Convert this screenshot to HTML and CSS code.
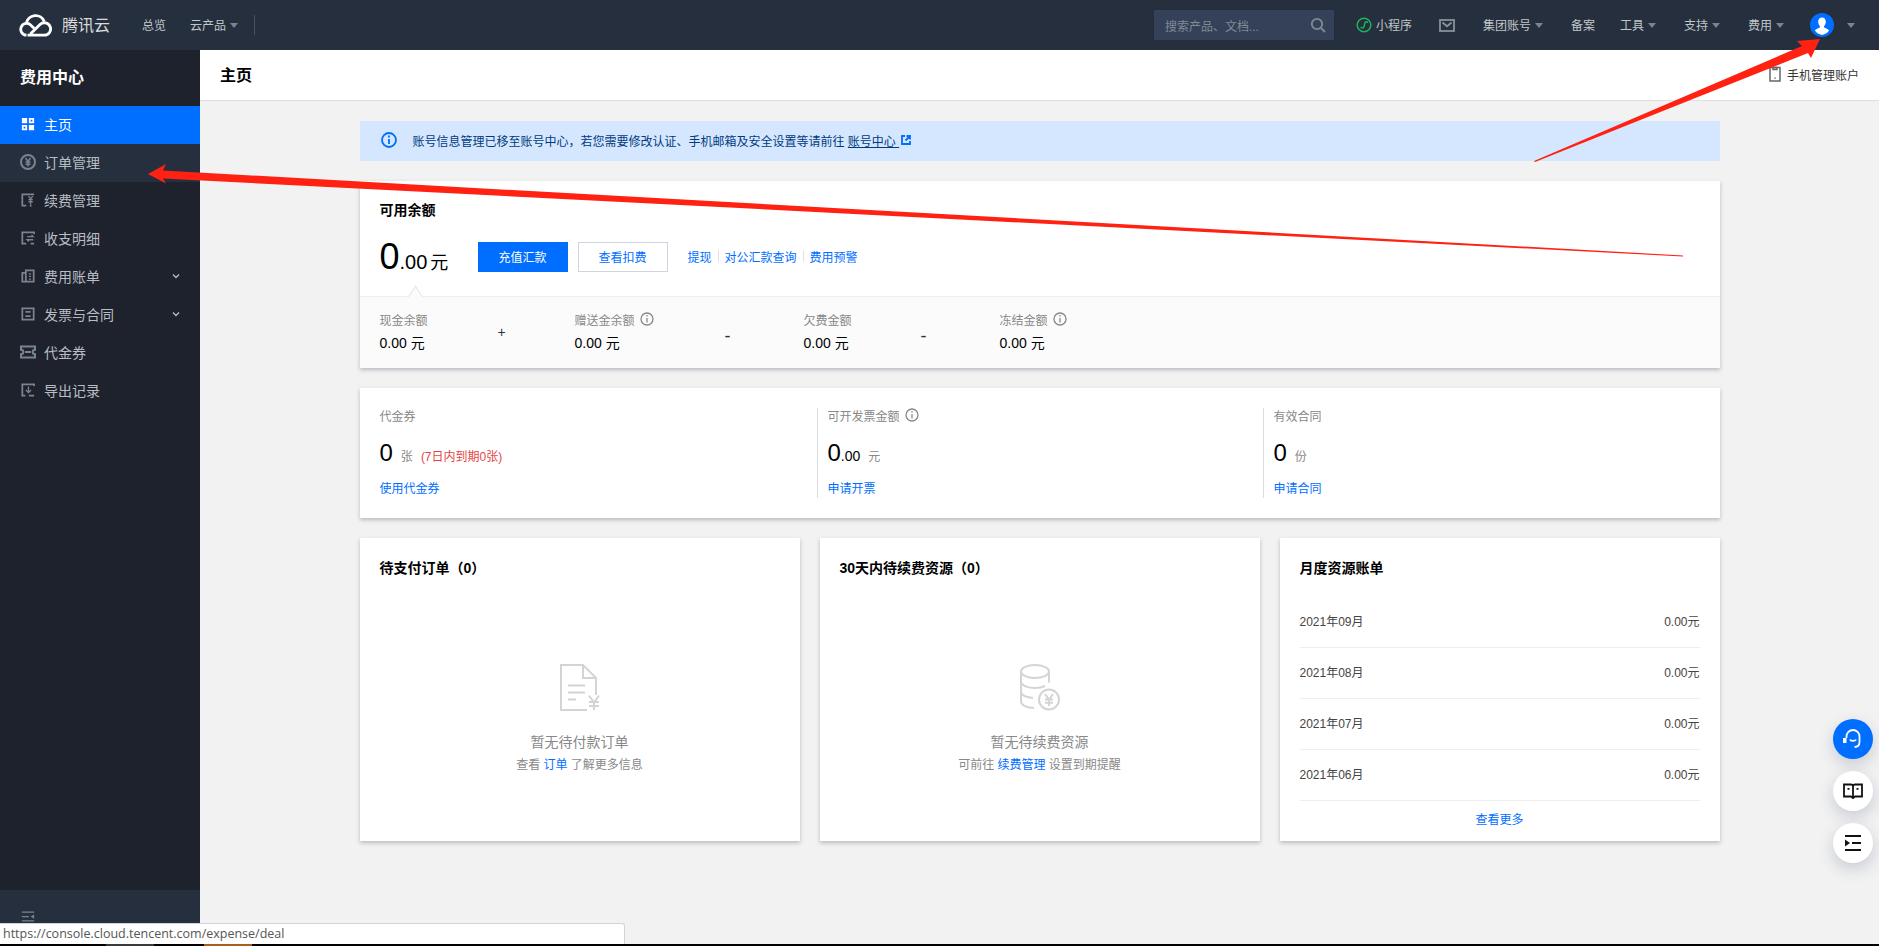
FILE: index.html
```html
<!DOCTYPE html>
<html lang="zh-CN">
<head>
  <meta charset="UTF-8">
  <title>费用中心</title>
  <link rel="stylesheet" href="styles.css">
</head>
<body>
  <header class="topbar">
    <svg class="logo" viewBox="0 0 33 24"><path d="M7.4 10.4A9.3 9.3 0 0 1 25.3 8.6"/><path d="M8.5 22.2H25.4a6.2 6.2 0 1 0-4.4-10.6L11.4 21"/><path d="M7.5 22.2a5.9 5.9 0 1 1 4.6-9.8l3.2 3"/></svg>
    <span class="brand">腾讯云</span>
    <a class="nav-link nav-home">总览</a>
    <a class="nav-link nav-products">云产品<i class="caret"></i></a>
    <span class="nav-divider"></span>
    <div class="top-right">
      <div class="search">
        <span>搜索产品、文档...</span>
        <svg class="search-icon" viewBox="0 0 16 16"><circle cx="7" cy="7" r="5.2"/><path d="M11 11l4 4"/></svg>
      </div>
      <a class="nav-link mini"><svg class="mini-icon" viewBox="0 0 16 16"><circle cx="8" cy="8" r="6.8"/><path d="M5 9.8c0 1.6 2.6 1.8 3-.2l.9-3.6c.4-1.8 2.6-1.6 2.6.1"/></svg>小程序</a>
      <svg class="mail-icon" viewBox="0 0 16 13"><rect x="1" y="1" width="14" height="11"/><path d="M3.5 3.500L8 7.300 12.500 3.500"/></svg>
      <a class="nav-link">集团账号<i class="caret"></i></a>
      <a class="nav-link nav-beian">备案</a>
      <a class="nav-link">工具<i class="caret"></i></a>
      <a class="nav-link">支持<i class="caret"></i></a>
      <a class="nav-link">费用<i class="caret"></i></a>
      <span class="avatar-wrap">
        <svg class="avatar" viewBox="0 0 24 24"><circle class="avatar-bg" cx="12" cy="12" r="12"/><path class="avatar-fg" d="M12 4.500c-2.500 0-3.800 2-3.800 4.300 0 1.800.8 3.300 1.700 4.200v1.400c-1.500.8-4 1.400-5 3.200A11 11 0 0 0 12 22a11 11 0 0 0 7.100-4.400c-1-1.800-3.500-2.400-5-3.200V13c.9-.9 1.700-2.400 1.700-4.200 0-2.300-1.300-4.300-3.800-4.300z"/></svg>
        <i class="caret"></i>
      </span>
    </div>
  </header>

  <div class="main">
    <aside class="sidebar">
      <div class="side-title">费用中心</div>
      <nav class="side-nav">
        <a class="side-item active"><svg class="ico" viewBox="0 0 16 16"><path class="solid" d="M1 1h6v6H1zM9 9h6v6H9zM1 9h6v6H1zM3 11v2h2v-2zM9 1h6v6H9zM11 3v2h2V3z" fill-rule="evenodd"/></svg>主页</a>
        <a class="side-item hover"><svg class="ico big" viewBox="0 0 16 16"><circle cx="8" cy="8" r="7"/><path class="thin" d="M5.500 4L8 7.500 10.500 4M8 7.500V12.500M5.500 8h5M5.500 10.300h5"/></svg>订单管理</a>
        <a class="side-item"><svg class="ico" viewBox="0 0 16 16"><path d="M15 1.500H1.500v13H6"/><path class="thin" d="M8.500 3.500L11 6.500 13.500 3.500M11 6.500V13M8.500 7.500h5M8.500 10h5"/><path d="M10 14.500h2"/></svg>续费管理</a>
        <a class="side-item"><svg class="ico" viewBox="0 0 16 16"><path d="M15 3.500V1.500H1.500v13H6M15 14.500H11"/><path class="thin" d="M7 6.500h7l-2-2M14 10H7l2 2"/></svg>收支明细</a>
        <a class="side-item has-sub"><svg class="ico" viewBox="0 0 16 16"><path d="M1.500 4.500h4v10h-4zM5.500 1.500h9v13h-9z"/><path class="thin" d="M9 5.500h2.500M9 8.500h2.500M9 11.500h2.500"/></svg>费用账单<svg class="chev" viewBox="0 0 8 6"><path d="M1 1.500L4 4.500 7 1.500"/></svg></a>
        <a class="side-item has-sub"><svg class="ico" viewBox="0 0 16 16"><path d="M1.500 1.500h13v13h-13z"/><path d="M5 5.500h6M5 10.500h6"/></svg>发票与合同<svg class="chev" viewBox="0 0 8 6"><path d="M1 1.500L4 4.500 7 1.500"/></svg></a>
        <a class="side-item"><svg class="ico big" viewBox="0 0 16 14"><path d="M1 1.500h14v3.200a2.300 2.300 0 0 0 0 4.600v3.200H1V9.300a2.300 2.300 0 0 0 0-4.600z"/><path d="M5 7h6"/></svg>代金券</a>
        <a class="side-item"><svg class="ico" viewBox="0 0 16 16"><path d="M15 3.500V1.500H1.500v13H5M15 14.500H9"/><path class="thin" d="M8.500 4v6M5.500 8l3 3 3-3"/></svg>导出记录</a>
      </nav>
      <div class="side-collapse">
        <svg class="ico" viewBox="0 0 16 16"><path class="thin" d="M1 2.500h14M1 7.500h8M1 12.500h14"/><path class="solid" d="M15 5v5l-4-2.500z"/></svg>
      </div>
    </aside>

    <section class="content">
      <div class="content-head">
        <h1>主页</h1>
        <a class="phone-link"><svg class="phone-icon" viewBox="0 0 12 16"><path d="M1 1.500h10v13.500H1z"/><path d="M4 1.500h4v2H4z"/><path d="M6 11.500v1.200"/></svg>手机管理账户</a>
      </div>

      <div class="page">
        <div class="notice">
          <svg class="notice-icon" viewBox="0 0 16 16"><circle cx="8" cy="8" r="7"/><path d="M8 7v5M8 3.600v1.800"/></svg>
          <span>账号信息管理已移至账号中心，若您需要修改认证、手机邮箱及安全设置等请前往 <a class="notice-link">账号中心&nbsp;</a></span>
          <svg class="ext-icon" viewBox="0 0 10 10"><path d="M4 1H1v8h8V6"/><path d="M5.500 1H9v3.500M9 1L4.500 5.500"/></svg>
        </div>

        <div class="card balance">
          <div class="balance-top">
            <h2 class="card-title">可用余额</h2>
            <div class="balance-row">
              <div class="amount"><b>0</b><em>.00</em><span>元</span></div>
              <a class="btn btn-primary">充值汇款</a>
              <a class="btn btn-line">查看扣费</a>
              <div class="links"><a>提现</a><a>对公汇款查询</a><a>费用预警</a></div>
            </div>
          </div>
          <div class="balance-detail">
            <div class="detail detail-cash"><p>现金余额</p><strong>0.00 元</strong></div>
            <span class="op op-plus">+</span>
            <div class="detail detail-gift"><p>赠送金余额<svg class="tip" viewBox="0 0 14 14"><circle cx="7" cy="7" r="6"/><path d="M7 6v4.500M7 3v1.500"/></svg></p><strong>0.00 元</strong></div>
            <span class="op op-minus">-</span>
            <div class="detail detail-owe"><p>欠费金额</p><strong>0.00 元</strong></div>
            <span class="op op-minus2">-</span>
            <div class="detail"><p>冻结金额<svg class="tip" viewBox="0 0 14 14"><circle cx="7" cy="7" r="6"/><path d="M7 6v4.500M7 3v1.500"/></svg></p><strong>0.00 元</strong></div>
          </div>
        </div>

        <div class="card stats">
          <div class="stat">
            <p>代金券</p>
            <div class="stat-value"><b>0</b><span>张</span><span class="warn">(7日内到期0张)</span></div>
            <a>使用代金券</a>
          </div>
          <div class="stat stat-mid">
            <p>可开发票金额<svg class="tip" viewBox="0 0 14 14"><circle cx="7" cy="7" r="6"/><path d="M7 6v4.500M7 3v1.500"/></svg></p>
            <div class="stat-value"><b>0</b><em>.00</em><span>元</span></div>
            <a>申请开票</a>
          </div>
          <div class="stat stat-last">
            <p>有效合同</p>
            <div class="stat-value"><b>0</b><span>份</span></div>
            <a>申请合同</a>
          </div>
        </div>

        <div class="panels">
          <div class="card panel">
            <h2 class="card-title">待支付订单（0）</h2>
            <div class="empty">
              <svg class="empty-icon" viewBox="0 0 40 47"><path d="M27 46H1V1h22l13 13v17"/><path d="M23 1v13h13"/><path d="M8 21.500h17M8 28.500h17M8 35.500h8"/><path d="M29 31.500l5 7 5-7M34 38.500V46M29 38h10M29 42h10" class="empty-thin"/></svg>
              <p>暂无待付款订单</p>
              <small>查看 <a>订单</a> 了解更多信息</small>
            </div>
          </div>
          <div class="card panel">
            <h2 class="card-title">30天内待续费资源（0）</h2>
            <div class="empty">
              <svg class="empty-icon" viewBox="0 0 40 47"><ellipse cx="15" cy="7.500" rx="14" ry="6.500"/><path d="M1 7.500v30c0 3.500 6 6.500 13 6.500M29 7.500v11M1 17.500c0 3.500 6 6.500 14 6.500 4.500 0 8-1 10-2M1 27.500c0 3.500 5 6.300 12 6.500"/><circle cx="29" cy="35.500" r="10"/><path class="empty-thin" d="M25 30l4 5.500 4-5.500M29 35.500V42M25 35.500h8M25 38.800h8"/></svg>
              <p>暂无待续费资源</p>
              <small>可前往 <a>续费管理</a> 设置到期提醒</small>
            </div>
          </div>
          <div class="card panel">
            <h2 class="card-title">月度资源账单</h2>
            <ul class="bills">
              <li><span>2021年09月</span><span>0.00元</span></li>
              <li><span>2021年08月</span><span>0.00元</span></li>
              <li><span>2021年07月</span><span>0.00元</span></li>
              <li><span>2021年06月</span><span>0.00元</span></li>
            </ul>
            <a class="more">查看更多</a>
          </div>
        </div>
      </div>

      <div class="float-btns">
        <a class="float-btn blue"><svg viewBox="0 0 20 20"><path d="M3.500 9V7.500a6.500 6.500 0 0 1 13 0V13c0 2.800-1.800 5-5 5"/><path d="M7 10.500c.6 1.700 5.400 1.700 6 0"/><path class="solid" d="M0 9h3.500v5H0z"/></svg></a>
        <a class="float-btn"><svg viewBox="0 0 20 20"><path d="M1 3.500h7c1 0 2 .7 2 2 0-1.300 1-2 2-2h7v12h-7l-2 1.500-2-1.500H1zM10 5.500v10"/><path d="M4.500 7.800h2M13.500 7.800h2"/></svg></a>
        <a class="float-btn"><svg viewBox="0 0 20 20"><path d="M2 3h16M9 10h9M2 17h16"/><path class="solid" d="M2 6.500l5 3.500-5 3.500z"/></svg></a>
      </div>
    </section>
  </div>

  <div class="taskbar"><span class="task-a"></span><span class="task-b"></span></div>
  <div class="status-url">https://console.cloud.tencent.com/expense/deal</div>

  <svg class="arrows" viewBox="0 0 1879 946">
    <polygon points="148,174 166,164 163,170.500 1683,255.500 1683,256.500 163,178.500 166,183.500"/>
    <polygon points="1820,39 1797,41 1802,46 1534,161 1535,162 1808,53 1811,58"/>
  </svg>
</body>
</html>
```

FILE: styles.css
```css
* { box-sizing: border-box; }
html, body { height: 100%; }
body {
  margin: 0;
  display: flex; flex-direction: column;
  overflow: hidden;
  position: relative;
  font-family: "Liberation Sans", "Noto Sans CJK SC", sans-serif;
  font-size: 12px;
  color: #000;
  background: #f2f2f2;
}
a { color: #006eff; text-decoration: none; }
h1, h2, p, ul { margin: 0; padding: 0; font-weight: normal; }
em { font-style: normal; }
svg { display: block; flex: none; fill: none; stroke: currentColor; }
svg .solid { fill: currentColor; stroke: none; }

/* top bar */
.topbar {
  height: 50px; flex: none;
  display: flex; align-items: center;
  padding-left: 19px;
  background: #262f3e;
  color: #c1c6c8;
}
.logo { width: 33px; height: 24px; color: #fff; stroke-width: 2.8; }
.brand { margin-left: 10px; padding-bottom: 2px; font-size: 16px; color: #d8dadd; }
.nav-link { display: flex; align-items: center; padding-bottom: 2px; color: #c1c6c8; }
.nav-home { margin-left: 32px; }
.nav-products { margin-left: 24px; }
.nav-beian { margin-right: -3px; }
.caret {
  width: 0; height: 0; margin-left: 4px; margin-top: 3px;
  border: 4px solid transparent; border-bottom: 0;
  border-top: 5px solid #7b8391;
}
.nav-divider { width: 1px; height: 20px; margin-left: 16px; background: #4a5261; }
.top-right { margin-left: auto; display: flex; align-items: center; gap: 28px; padding-right: 24px; }
.search {
  width: 180px; height: 30px; margin-right: -6px;
  display: flex; align-items: center; justify-content: space-between;
  padding: 0 8px 0 11px;
  background: #344158; color: #828a97;
}
.search-icon { width: 16px; height: 16px; stroke-width: 1.800; }
.mini { margin-right: -1px; }
.mini-icon { width: 16px; height: 16px; margin-right: 4px; margin-top: 2px; color: #1bb45c; stroke-width: 1.500; }
.mail-icon { width: 16px; height: 13px; color: #8a919c; stroke-width: 1.800; }
.avatar-wrap { display: flex; align-items: center; gap: 9px; margin-left: -2px; }
.avatar-wrap .caret { margin-top: 0; }
.avatar { width: 24px; height: 24px; stroke: none; }
.avatar-bg { fill: #006eff; }
.avatar-fg { fill: #fff; }

.main { flex: 1; min-height: 0; display: flex; }

/* left menu */
.sidebar {
  width: 200px; flex: none;
  display: flex; flex-direction: column;
  background: #1e222d;
}
.side-title {
  height: 56px; padding: 0 20px;
  line-height: 56px;
  font-size: 16px; font-weight: bold; color: #fff;
}
.side-item {
  position: relative;
  height: 38px;
  display: flex; align-items: center; gap: 9px;
  padding: 0 0 2px 21px;
  font-size: 14px; color: #b8bdc4;
}
.side-item.active { background: #006eff; color: #fff; }
.side-item.hover { background: #262f3e; }
.ico { width: 14px; height: 14px; color: #7b838f; stroke-width: 2; }
.ico .thin { stroke-width: 1.500; }
.ico.big { width: 16px; height: 16px; margin-left: -1px; margin-right: -1px; }
.active .ico { color: #fff; }
.chev {
  position: absolute; right: 20px; top: 15px;
  width: 8px; height: 6px;
  color: #b8bdc4; stroke-width: 1.300;
}
.side-collapse {
  margin-top: auto; height: 54px;
  padding: 20px 0 0 21px;
  background: #262f3e;
}

/* right side */
.content { flex: 1; min-width: 0; position: relative; }
.content-head {
  height: 51px;
  display: flex; align-items: center; justify-content: space-between;
  padding: 0 20px 2px;
  background: #fff;
  border-bottom: 1px solid #dfdfdf;
}
.content-head h1 { font-size: 16px; font-weight: bold; }
.phone-link { display: flex; align-items: center; gap: 6px; color: #333; }
.phone-icon { width: 12px; height: 16px; color: #666; stroke-width: 1.500; }
.page {
  width: 1360px; margin: 0 auto; padding-top: 20px;
  display: flex; flex-direction: column; gap: 20px;
}
.notice {
  height: 40px;
  display: flex; align-items: center;
  padding: 0 0 2px 21px;
  background: #d5e7ff;
  color: #003b80;
}
.notice-icon { width: 16px; height: 16px; margin-right: 16px; color: #006eff; stroke-width: 1.800; }
.notice-link { color: #003b80; text-decoration: underline; }
.ext-icon { width: 10px; height: 10px; margin-left: 2px; color: #006eff; stroke-width: 1.800; }

.card {
  background: #fff;
  box-shadow: 0 2px 4px rgba(54, 58, 80, .3);
}
.card-title { font-size: 14px; font-weight: bold; line-height: 20px; }

/* balance */
.balance-top { height: 115px; padding: 19px 20px 0; }
.balance-row { display: flex; align-items: center; height: 30px; margin-top: 22px; }
.amount { width: 98px; display: flex; align-items: baseline; white-space: nowrap; }
.amount b { font-size: 36px; font-weight: normal; }
.amount em { font-size: 20px; }
.amount span { font-size: 18px; margin-left: 3px; }
.btn {
  width: 90px; height: 30px; margin-right: 10px; padding-bottom: 2px;
  display: flex; align-items: center; justify-content: center;
}
.btn-primary { background: #006eff; color: #fff; }
.btn-line { background: #fff; border: 1px solid #cfd5de; }
.links { display: flex; margin: -2px 0 0 10px; }
.links a + a { margin-left: 6px; padding-left: 7px; position: relative; }
.links a + a::before {
  content: ""; position: absolute; left: 0; top: 2px;
  width: 1px; height: 12px; background: #dde2e8;
}
.balance-detail {
  position: relative;
  height: 72px;
  display: flex;
  padding: 14px 20px 0;
  background: #fbfbfb;
  border-top: 1px solid #eee;
}
.balance-detail::before {
  content: ""; position: absolute; left: 49px; top: -7px;
  width: 12px; height: 12px;
  background: #fbfbfb;
  border-top: 1px solid #e4e4e4; border-left: 1px solid #e4e4e4;
  transform: rotate(45deg) skew(12deg, 12deg);
}
.detail p { display: flex; align-items: center; gap: 5px; height: 16px; color: #888; }
.detail strong { display: block; margin-top: 7px; font-size: 14px; font-weight: normal; line-height: 18px; }
.detail-cash { width: 118px; }
.detail-gift { width: 150px; }
.detail-owe { width: 117px; }
.op { font-size: 14px; line-height: 16px; margin-top: 13px; color: #333; }
.op-plus { width: 77px; }
.op-minus { width: 79px; margin-top: 17px; font-size: 18px; }
.op-minus2 { width: 79px; margin-top: 17px; font-size: 18px; }
.tip { width: 14px; height: 14px; color: #888; stroke-width: 1.300; }

/* stats */
.stats {
  height: 130px; padding: 20px;
  display: grid; grid-template-columns: 437px 446px 1fr;
}
.stat { display: flex; flex-direction: column; }
.stat p { display: flex; align-items: center; gap: 5px; height: 16px; margin-top: -1px; color: #888; }
.stat-value { display: flex; align-items: baseline; height: 30px; margin-top: 15px; color: #888; }
.stat-value b { font-size: 24px; font-weight: normal; color: #000; line-height: 30px; }
.stat-value em { font-size: 14px; color: #000; }
.stat-value span { margin-left: 8px; }
.stat-value .warn { color: #e54545; }
.stat a { margin-top: 12px; line-height: 18px; }
.stat-mid, .stat-last { border-left: 1px solid #ddd; padding-left: 10px; }

/* bottom panels */
.panels { display: grid; grid-template-columns: repeat(3, 1fr); gap: 20px; }
.panel { height: 303px; padding: 20px; }
.empty { display: flex; flex-direction: column; align-items: center; text-align: center; }
.empty-icon { width: 40px; height: 47px; margin-top: 86px; color: #d4d4d4; stroke-width: 2; }
.empty p { margin-top: 21px; font-size: 14px; line-height: 20px; color: #888; }
.empty small { margin-top: 4px; font-size: 12px; line-height: 18px; color: #888; }
.bills { list-style: none; margin-top: 19px; }
.bills li {
  height: 51px; padding-bottom: 3px;
  display: flex; align-items: center; justify-content: space-between;
  border-bottom: 1px solid #eee;
  color: #444;
}
.more { display: block; margin-top: 10px; line-height: 18px; text-align: center; }

/* floating helpers */
.float-btns {
  position: absolute; right: 6px; top: 669px;
  display: flex; flex-direction: column; gap: 12px;
}
.float-btn {
  width: 40px; height: 40px; border-radius: 50%;
  display: flex; align-items: center; justify-content: center;
  background: #fff; color: #111;
  box-shadow: 0 6px 16px rgba(30, 50, 90, .2);
}
.float-btn svg { width: 20px; height: 20px; stroke-width: 1.800; }
.float-btn.blue { background: #006eff; color: #fff; }

/* browser bits at the bottom */
.taskbar { height: 2px; flex: none; position: relative; background: #000; }
.task-a, .task-b { position: absolute; top: 0; height: 2px; width: 48px; }
.task-a { left: 106px; background: #3a3a3a; }
.task-b { left: 204px; background: #a95f1c; }
.status-url {
  position: absolute; left: 0; bottom: 2px;
  width: 625px; height: 21px;
  padding: 0 3px;
  font-family: "Open Sans", sans-serif;
  font-size: 12.500px;
  line-height: 20px;
  background: #fff; color: #555;
  border: 1px solid #d4d4d4; border-left: 0; border-bottom: 0;
  border-radius: 0 3px 0 0;
}

.arrows { position: absolute; left: 0; top: 0; width: 1879px; height: 946px; stroke: none; pointer-events: none; }
.arrows polygon { fill: #ff2112; }
```
